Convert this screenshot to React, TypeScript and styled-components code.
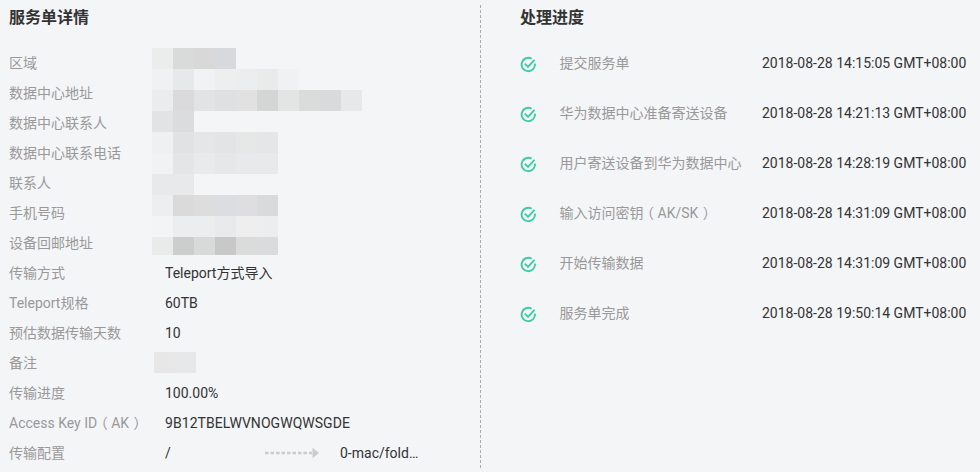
import React from "react";
import styled, { createGlobalStyle } from "styled-components";

const GlobalStyle = createGlobalStyle`
  * { box-sizing: border-box; }
  body {
    margin: 0;
    background: #f4f5f7;
    color: #333;
    font-family: Roboto, "Noto Sans CJK SC", sans-serif;
    font-size: 14px;
  }
`;

const Page = styled.main`
  display: flex;
  width: 980px;
  height: 472px;
  overflow: hidden;
  background: #f4f5f7;
`;

const DetailPanel = styled.section`
  position: relative;
  width: 480px;
  padding: 6px 0 0 9px;
`;

const Divider = styled.div`
  width: 1px;
  height: 464px;
  margin-top: 5px;
  background: repeating-linear-gradient(#aaa 0 3px, transparent 3px 5px);
`;

const ProgressPanel = styled.section`
  flex: 1;
  padding: 6px 0 0 39px;
`;

const Title = styled.h2`
  margin: 0 0 18px;
  height: 24px;
  font-size: 16px;
  line-height: 24px;
  font-weight: 700;
  white-space: nowrap;
`;

const DetailRow = styled.div`
  display: grid;
  grid-template-columns: 156px 1fr;
  height: 30px;
  line-height: 30px;
  white-space: nowrap;
`;

const Label = styled.span`
  color: #999;
`;

const Paren = styled.span<{ $shift: number }>`
  display: inline-block;
  transform: translateX(${(p) => p.$shift}px);
`;

const Value = styled.span<{ $spacing?: number }>`
  color: #333;
  letter-spacing: ${(p) => p.$spacing ?? 0}px;
`;

const Transfer = styled.span`
  display: grid;
  grid-template-columns: 100px 75px auto;
  align-items: center;
`;

const Mosaic = styled.div<{ $x: number; $y: number }>`
  position: absolute;
  left: ${(p) => p.$x}px;
  top: ${(p) => p.$y}px;
`;

const MosaicRow = styled.div<{ $h?: number }>`
  display: flex;
  height: ${(p) => p.$h ?? 21}px;
`;

const Tile = styled.i<{ $c: string }>`
  width: 21px;
  background: ${(p) => p.$c};
`;

const Step = styled.div`
  display: grid;
  grid-template-columns: 39.5px 202.5px 1fr;
  height: 30px;
  margin-bottom: 20px;
  line-height: 30px;
  white-space: nowrap;
`;

const CheckIcon = styled.svg`
  display: block;
  margin-top: 8px;
`;

const Arrow = styled.svg`
  display: block;
`;

const details: [string, string][] = [
  ["区域", ""],
  ["数据中心地址", ""],
  ["数据中心联系人", ""],
  ["数据中心联系电话", ""],
  ["联系人", ""],
  ["手机号码", ""],
  ["设备回邮地址", ""],
  ["传输方式", "Teleport方式导入"],
  ["Teleport规格", "60TB"],
  ["预估数据传输天数", "10"],
  ["备注", ""],
  ["传输进度", "100.00%"],
  ["Access Key ID（AK）", "9B12TBELWVNOGWQWSGDE"],
];

const steps: [string, string][] = [
  ["提交服务单", "2018-08-28 14:15:05 GMT+08:00"],
  ["华为数据中心准备寄送设备", "2018-08-28 14:21:13 GMT+08:00"],
  ["用户寄送设备到华为数据中心", "2018-08-28 14:28:19 GMT+08:00"],
  ["输入访问密钥（AK/SK）", "2018-08-28 14:31:09 GMT+08:00"],
  ["开始传输数据", "2018-08-28 14:31:09 GMT+08:00"],
  ["服务单完成", "2018-08-28 19:50:14 GMT+08:00"],
];

const tiles = [
  ["#ebedec", "#d9dbda", "#d8d8d8", "#d8d9dd"],
  ["#f0f1f3", "#e7e8ea", "#f1f2f4", "#edefee", "#ecedef", "#e9ebea", "#f0f1f3"],
  ["#ebecee", "#dadadc", "#e2e3e5", "#dfe0e2", "#e1e1e1", "#d4d6d5", "#e3e5e4", "#dadcdb", "#d9dadc", "#e7e8ea"],
  ["#e2e3e5", "#dbdcde"],
  ["#eff0f2", "#e1e2e4", "#e6e6e6", "#e3e4e6", "#e6e8e7", "#e5e6e8"],
  ["#f1f2f4", "#e4e5e7", "#e9eaec", "#e6e7e9", "#e8e9eb", "#e8e9eb"],
  ["#e8e9eb", "#e8e9eb"],
  ["#edeef0", "#dadada", "#dddddd", "#dcdde0", "#dedee0", "#d9dadc"],
  ["#f3f4f6", "#ecedef", "#ecedef", "#e9eaec", "#eeeeee", "#ecedef"],
  ["#e9ebea", "#cccecd", "#d8dad9", "#c8c8c8", "#dadcdb", "#dadbdd"],
];

function LabelText({ text }: { text: string }) {
  return (
    <Label>
      {text.split(/([（）])/).map((part, i) => {
        if (part === "（") return <Paren key={i} $shift={-3.5}>{part}</Paren>;
        if (part === "）") return <Paren key={i} $shift={4.5}>{part}</Paren>;
        return part;
      })}
    </Label>
  );
}

function StepCheck() {
  return (
    <CheckIcon width="17" height="17" viewBox="0 0 17 17" fill="none" stroke="#3dcca6" strokeWidth="1.9">
      <path d="M11.6 2.65A6.7 6.7 0 1 0 14.95 7.7" />
      <path d="M4.9 7.7 8 10.8 14.5 3.8" />
    </CheckIcon>
  );
}

export default function App() {
  return (
    <>
      <GlobalStyle />
      <Page>
        <DetailPanel>
          <Title>服务单详情</Title>
          {details.map(([label, value]) => (
            <DetailRow key={label}>
              <LabelText text={label} />
              <Value $spacing={value.length > 15 ? 0.06 : 0}>{value}</Value>
            </DetailRow>
          ))}
          <DetailRow>
            <Label>传输配置</Label>
            <Transfer>
              <Value>/</Value>
              <Arrow width="54" height="12" viewBox="0 0 54 12" fill="#ccc">
                <path d="M0 6H47" stroke="#ccc" strokeWidth="2.6" strokeDasharray="3.5 2" />
                <path d="M47.5 0.8 54 6 47.5 11.2Z" />
              </Arrow>
              <Value>0-mac/fold…</Value>
            </Transfer>
          </DetailRow>
          <Mosaic $x={152} $y={48}>
            {tiles.map((row, i) => (
              <MosaicRow key={i} $h={i === 9 ? 18 : 21}>
                {row.map((c, j) => (
                  <Tile key={j} $c={c} />
                ))}
              </MosaicRow>
            ))}
          </Mosaic>
          <Mosaic $x={154} $y={352}>
            <MosaicRow>
              <Tile $c="#e7e7e8" />
              <Tile $c="#e7e8e9" />
            </MosaicRow>
          </Mosaic>
        </DetailPanel>
        <Divider />
        <ProgressPanel>
          <Title>处理进度</Title>
          {steps.map(([label, time]) => (
            <Step key={label}>
              <StepCheck />
              <LabelText text={label} />
              <Value>{time}</Value>
            </Step>
          ))}
        </ProgressPanel>
      </Page>
    </>
  );
}
